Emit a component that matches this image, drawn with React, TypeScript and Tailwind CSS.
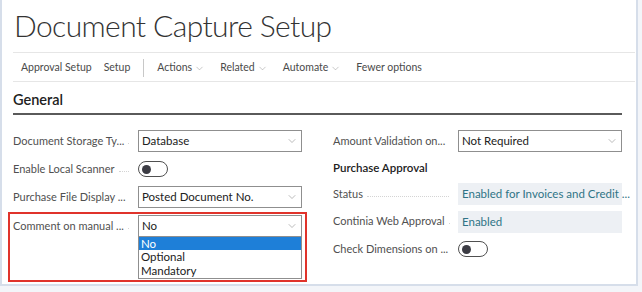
import { ChevronDown } from 'lucide-react'

const font = { fontFamily: 'Lato, "Open Sans", sans-serif' }

function Label({ text }: { text: string }) {
  return (
    <div className="flex w-[125px] shrink-0 items-center pr-[5px] text-[11px]">
      <span className="whitespace-nowrap text-[#505050]">{text}</span>
      <span className="mx-[4px] mt-[4px] h-0 flex-1 border-b border-dotted border-[#d4d4d4]" />
    </div>
  )
}

function Select({ value }: { value: string }) {
  return (
    <div className="flex h-[22px] w-[164px] items-center justify-between border border-[#8f8f8f] bg-white pl-[3px] pr-[3px] text-[#212121]">
      <span>{value}</span>
      <ChevronDown size={12} strokeWidth={1} className="text-[#777]" />
    </div>
  )
}

function ReadOnly({ value }: { value: string }) {
  return (
    <div className="flex h-[22px] w-[164px] items-center bg-[#edf0f4] pl-[4px] text-[#2f7486]">
      <span className="whitespace-nowrap">{value}</span>
    </div>
  )
}

function Toggle() {
  return (
    <div className="flex h-[16px] w-[30px] items-center rounded-full border border-[#505050] bg-white pl-[3px]">
      <div className="h-[9px] w-[9px] rounded-full bg-[#3c3c44]" />
    </div>
  )
}

function Row({ children, h = 'h-[28px]' }: { children: React.ReactNode; h?: string }) {
  return <div className={`flex ${h} items-center`}>{children}</div>
}

export default function App() {
  return (
    <div className="h-[292px] w-[642px] overflow-hidden bg-[#f3f5f9] text-[11.5px]" style={font}>
      <div className="h-[286px] w-[638px] border-b-2 border-l-2 border-r-2 border-[#d6deea] bg-white pl-[11px] pr-[1px]">
        {/* Title */}
        <div className="flex h-[53px] items-center border-b border-[#e6e6e6] pb-[2px]">
          <h1 className="pl-[1px] text-[30px] font-light leading-none tracking-[-0.6px] text-[#333]">Document Capture Setup</h1>
        </div>

        {/* Action bar */}
        <div className="flex h-[29px] items-center border-b border-[#e6e6e6] pl-[8px] pt-[2px] text-[10.5px] text-[#4a4a4a]">
          <span>Approval Setup</span>
          <span className="ml-[12px]">Setup</span>
          <span className="mx-[13px] h-[18px] w-px bg-[#c8c8c8]" />
          <span className="flex items-center gap-[2px]">
            Actions <ChevronDown size={11} strokeWidth={1} className="text-[#888]" />
          </span>
          <span className="ml-[15px] flex items-center gap-[2px]">
            Related <ChevronDown size={11} strokeWidth={1} className="text-[#888]" />
          </span>
          <span className="ml-[15px] flex items-center gap-[2px]">
            Automate <ChevronDown size={11} strokeWidth={1} className="text-[#888]" />
          </span>
          <span className="ml-[15px]">Fewer options</span>
        </div>

        {/* General */}
        <div className="mr-[13px] flex h-[33px] items-end border-b-2 border-[#5a5a5a] pb-[2px]">
          <span className="text-[14.5px] font-semibold text-[#212121]">General</span>
        </div>

        <div className="mt-[12px] flex gap-[31px]">
          {/* Left column */}
          <div className="flex w-[289px] flex-col">
            <Row>
              <Label text="Document Storage Ty..." />
              <Select value="Database" />
            </Row>
            <Row>
              <Label text="Enable Local Scanner" />
              <Toggle />
            </Row>
            <Row>
              <Label text="Purchase File Display ..." />
              <Select value="Posted Document No." />
            </Row>
            <div className="-ml-[5px] mt-[1px] w-[299px] border-2 border-[#e0332b] pb-[1px] pl-[3px] pt-[1px]">
              <div className="flex h-[22px] items-center">
                <Label text="Comment on manual ..." />
                <Select value="No" />
              </div>
              <div className="ml-[125px] w-[164px] border border-t-0 border-[#8f8f8f] bg-white">
                <div className="flex h-[13px] items-center bg-[#1e7fd8] pl-[2px] text-white">No</div>
                <div className="flex h-[14px] items-center pl-[2px] text-[#212121]">Optional</div>
                <div className="flex h-[14px] items-center pl-[2px] text-[#212121]">Mandatory</div>
              </div>
            </div>
          </div>

          {/* Right column */}
          <div className="flex w-[289px] flex-col">
            <Row>
              <Label text="Amount Validation on..." />
              <Select value="Not Required" />
            </Row>
            <Row h="h-[25px]">
              <span className="font-semibold text-[#212121]">Purchase Approval</span>
            </Row>
            <Row>
              <Label text="Status" />
              <ReadOnly value="Enabled for Invoices and Credit ..." />
            </Row>
            <Row h="h-[27px]">
              <Label text="Continia Web Approval" />
              <ReadOnly value="Enabled" />
            </Row>
            <Row>
              <Label text="Check Dimensions on ..." />
              <Toggle />
            </Row>
          </div>
        </div>
      </div>
    </div>
  )
}
